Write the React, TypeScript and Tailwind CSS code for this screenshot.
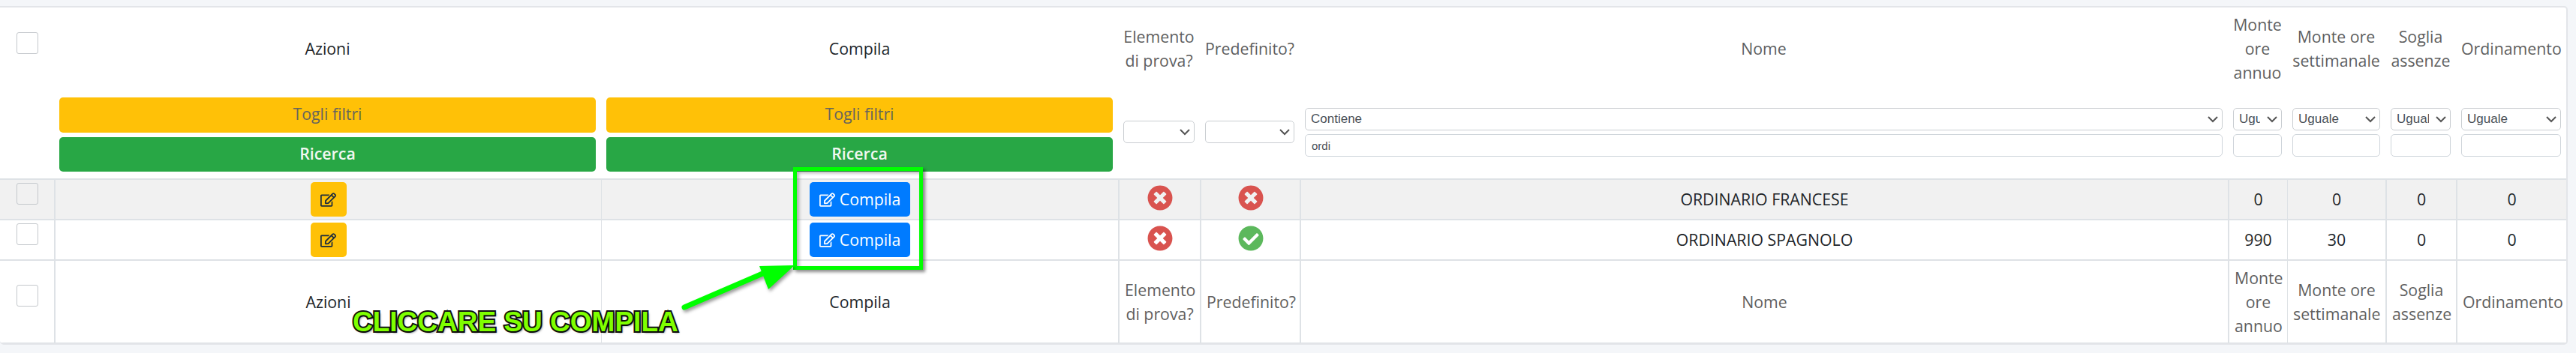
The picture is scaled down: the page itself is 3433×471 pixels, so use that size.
import { FaCheckCircle, FaRegEdit, FaTimesCircle } from "react-icons/fa";

const headers = [
  { label: "Azioni", dark: true, divider: "border-l-2" },
  { label: "Compila", dark: true, divider: "border-l" },
  { label: "Elemento di prova?", divider: "border-l-2" },
  { label: "Predefinito?", divider: "border-l-2" },
  { label: "Nome", divider: "border-l-2" },
  { label: "Monte ore annuo", divider: "border-l-2" },
  { label: "Monte ore settimanale", divider: "border-l" },
  { label: "Soglia assenze", divider: "border-l-2" },
  { label: "Ordinamento", divider: "border-l-2" },
];

const rows = [
  { name: "ORDINARIO FRANCESE", test: false, preset: false, year: 0, week: 0, absence: 0, order: 0, striped: true },
  { name: "ORDINARIO SPAGNOLO", test: false, preset: true, year: 990, week: 30, absence: 0, order: 0, striped: false },
];

function Checkbox() {
  return <div className="mx-auto h-[29px] w-[29px] rounded-[3px] border border-[#c4c8cc] bg-transparent" />;
}

function FilterButtons() {
  return (
    <div className="flex flex-col gap-[6px]">
      <button className="h-[47px] rounded-[5px] bg-[#ffc107] pb-[3px] text-[21.3px] font-medium text-[#66655c]">Togli filtri</button>
      <button className="h-[46px] rounded-[5px] bg-[#28a745] pb-[2px] text-[21.3px] font-semibold text-[#f1f8f1]">Ricerca</button>
    </div>
  );
}

function FilterSelect({ value }: { value?: string }) {
  return (
    <div className="relative h-[30px] w-full">
      <select
        defaultValue={value}
        className="block h-[30px] w-full appearance-none rounded-[5px] border border-[#c9cdd1] bg-white pl-[7px] pr-[28px] font-['Liberation_Sans',sans-serif] text-[17px] leading-[26px] text-[#495057]"
      >
        {value ? <option>{value}</option> : <option />}
      </select>
      <svg viewBox="0 0 14 9" className="pointer-events-none absolute right-[6px] top-[11px] h-[9px] w-[14px]" fill="none" stroke="#555" strokeWidth="2">
        <path d="M1 1l6 6 6-6" />
      </svg>
    </div>
  );
}

function FilterInput({ value }: { value?: string }) {
  return (
    <input
      readOnly
      value={value ?? ""}
      className="block h-[30px] w-full rounded-[5px] border border-[#ced4da] bg-white px-[8px] font-['Liberation_Sans',sans-serif] text-[15px] text-[#495057] outline-none"
    />
  );
}

function FlagIcon({ ok }: { ok: boolean }) {
  return ok ? (
    <FaCheckCircle className="mx-auto mb-[4px] h-[34px] w-[34px] text-[#5cb85c]" />
  ) : (
    <FaTimesCircle className="mx-auto mb-[4px] h-[34px] w-[34px] text-[#d9534f]" />
  );
}

function HeaderRow({ footer }: { footer?: boolean }) {
  return (
    <tr className={footer ? "h-[112px]" : "h-[110px]"}>
      <th className={`align-top ${footer ? "border-t-2 border-b pt-[32px]" : "pt-[33px]"} border-[#dee2e6] font-normal`}>
        <Checkbox />
      </th>
      {headers.map((h) => (
        <th
          key={h.label}
          className={`border-[#dee2e6] px-[7px] text-center align-middle leading-[32px] ${footer ? `border-t-2 border-b ${h.divider}` : ""} ${
            h.dark ? "font-normal text-[#212529]" : "font-medium text-[#5f5f5f]"
          }`}
        >
          {h.label}
        </th>
      ))}
    </tr>
  );
}

export default function App() {
  const cell = "border-t-2 border-[#dee2e6] text-center align-middle text-[#212529]";
  return (
    <div className="relative h-[471px] w-[3433px] overflow-hidden bg-[#f4f6f9] pt-[8px] font-['Open_Sans',sans-serif] text-[21.3px]">
      <div className="w-[3422px] overflow-hidden rounded-r-[5px] rounded-b-[5px] border-y-2 border-r-2 border-[#e3e5e9] bg-white">
        <table className="w-[3420px] table-fixed border-separate border-spacing-0">
          <colgroup>
            <col className="w-[72px]" />
            <col className="w-[729px]" />
            <col className="w-[689px]" />
            <col className="w-[109px]" />
            <col className="w-[133px]" />
            <col className="w-[1237px]" />
            <col className="w-[79px]" />
            <col className="w-[131px]" />
            <col className="w-[94px]" />
            <col className="w-[147px]" />
          </colgroup>
          <thead>
            <HeaderRow />
            <tr className="h-[118px]">
              <th />
              <th className="px-[7px]">
                <FilterButtons />
              </th>
              <th className="px-[7px]">
                <FilterButtons />
              </th>
              <th className="px-[7px]">
                <div className="mb-[6px]">
                  <FilterSelect />
                </div>
              </th>
              <th className="px-[7px]">
                <div className="mb-[6px]">
                  <FilterSelect />
                </div>
              </th>
              <th className="px-[7px] font-normal">
                <div className="mb-[5px] flex flex-col gap-[5px]">
                  <FilterSelect value="Contiene" />
                  <FilterInput value="ordi" />
                </div>
              </th>
              {["Uguale", "Uguale", "Uguale", "Uguale"].map((v, i) => (
                <th key={i} className="px-[7px] font-normal">
                  <div className="mb-[5px] flex flex-col gap-[5px]">
                    <FilterSelect value={v} />
                    <FilterInput />
                  </div>
                </th>
              ))}
            </tr>
          </thead>
          <tbody>
            {rows.map((r) => (
              <tr key={r.name} className={`h-[54px] ${r.striped ? "bg-[#f1f1f1]" : ""}`}>
                <td className="border-t-2 border-[#dee2e6] pt-[4px] align-top">
                  <Checkbox />
                </td>
                <td className={`${cell} border-l-2`}>
                  <button className="inline-flex h-[46px] w-[48px] items-center justify-center rounded-[5px] bg-[#ffc107] align-middle text-[#1f2d3d]">
                    <FaRegEdit className="h-[19px] w-[21px]" />
                  </button>
                </td>
                <td className={`${cell} border-l`}>
                  <button className="inline-flex h-[46px] w-[134px] items-center justify-center gap-[6px] rounded-[5px] bg-[#007bff] align-middle text-white">
                    <FaRegEdit className="h-[19px] w-[21px]" />
                    Compila
                  </button>
                </td>
                <td className={`${cell} border-l-2`}>
                  <FlagIcon ok={r.test} />
                </td>
                <td className={`${cell} border-l-2`}>
                  <FlagIcon ok={r.preset} />
                </td>
                <td className={`${cell} border-l-2`}>{r.name}</td>
                <td className={`${cell} border-l-2`}>{r.year}</td>
                <td className={`${cell} border-l`}>{r.week}</td>
                <td className={`${cell} border-l-2`}>{r.absence}</td>
                <td className={`${cell} border-l-2`}>{r.order}</td>
              </tr>
            ))}
          </tbody>
          <tfoot>
            <HeaderRow footer />
          </tfoot>
        </table>
      </div>

      {/* screenshot annotation drawn on top of the table */}
      <div className="absolute left-[1057px] top-[223px] h-[137px] w-[173px] border-[5px] border-[#00ff00] shadow-[3px_3px_4px_rgba(0,0,0,0.45),inset_3px_3px_4px_rgba(0,0,0,0.3)]" />
      <svg className="absolute left-[900px] top-[345px] h-[75px] w-[170px] drop-shadow-[2px_3px_2px_rgba(0,0,0,0.4)]" viewBox="0 0 170 75">
        <path d="M12 65L128 15" stroke="#00ff00" strokeWidth="7" strokeLinecap="round" />
        <path d="M112 10L159 9L124 41Z" fill="#00ff00" />
      </svg>
      <div className="absolute left-[470px] top-[409px] whitespace-nowrap font-['Liberation_Sans',sans-serif] text-[37px] font-bold leading-[42px] text-[#7fff00] [-webkit-text-stroke:4px_#111] [paint-order:stroke_fill] [text-shadow:2px_2px_3px_rgba(0,0,0,0.55)]">
        CLICCARE SU COMPILA
      </div>
    </div>
  );
}
